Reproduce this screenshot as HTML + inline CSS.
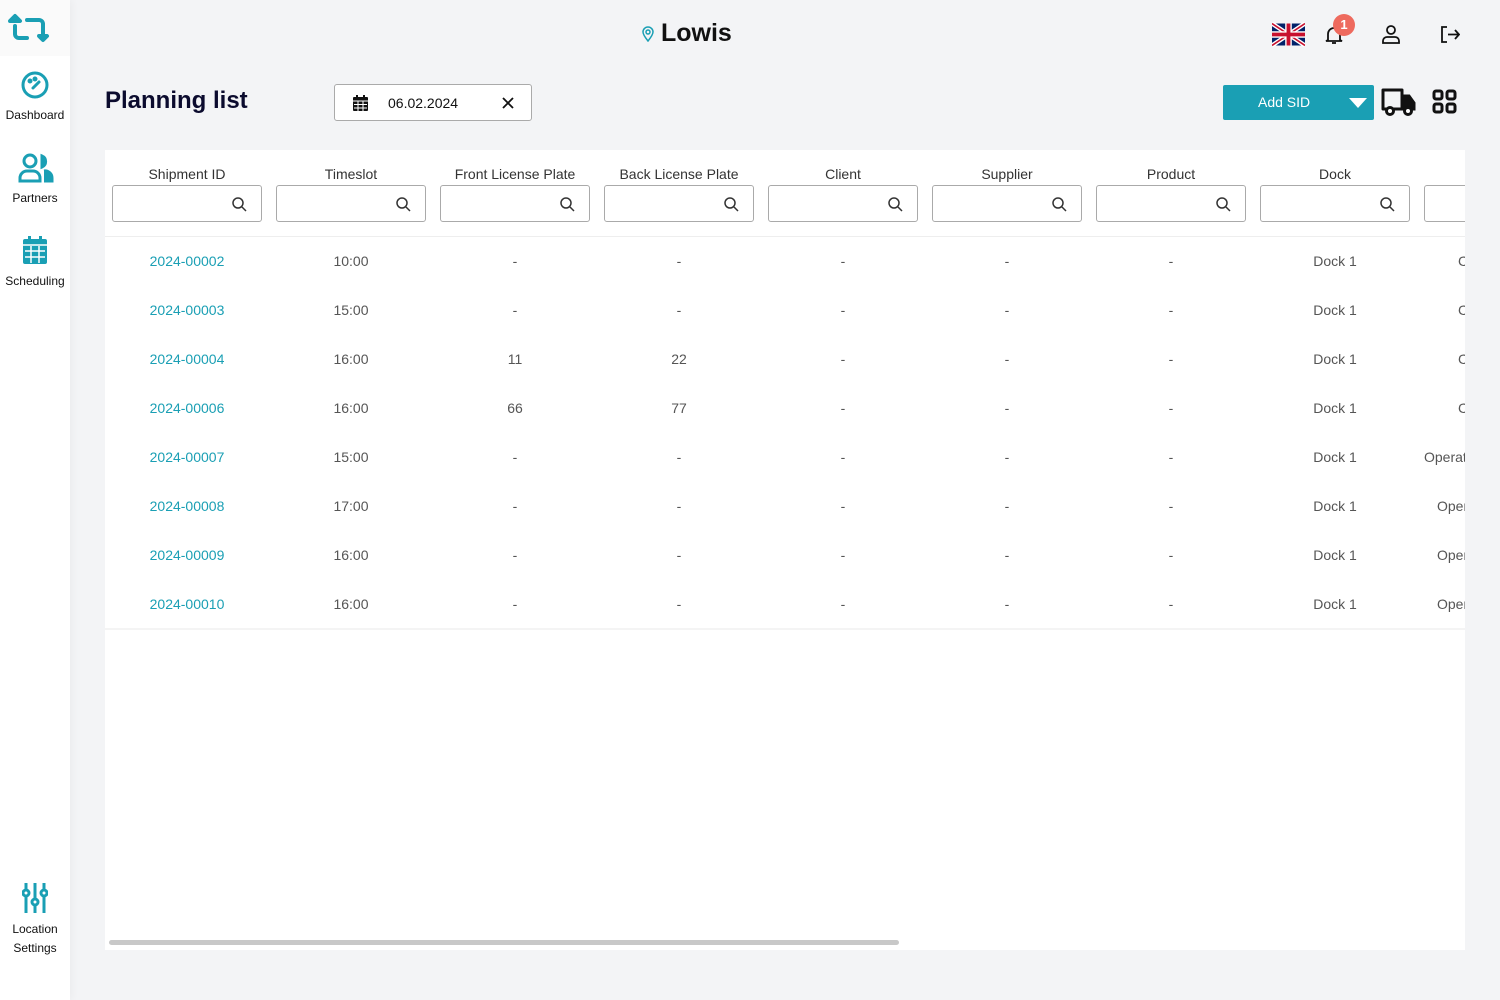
<!DOCTYPE html>
<html><head><meta charset="utf-8"><style>
*{margin:0;padding:0;box-sizing:border-box}
body{width:1500px;height:1000px;background:#f3f4f6;font-family:"Liberation Sans",Roboto,sans-serif;position:relative;overflow:hidden;color:#333}
.side{position:absolute;left:0;top:0;width:70px;height:1000px;background:#fff;box-shadow:2px 0 8px rgba(0,0,0,.04)}
.nav{position:absolute;left:0;width:70px;text-align:center;font-size:12px;color:#111;background:#fff}
.ab{position:absolute}
.card{position:absolute;left:105px;top:150px;width:1360px;height:800px;background:#fff;overflow:hidden}
.col{position:absolute;top:0;width:164px;text-align:center}
.col .h{font-size:14px;color:#333;margin-top:16px;height:19px}
.col .in{margin:0 auto;width:150px;height:37px;border:1px solid #aaa;border-radius:3px;position:relative}
.col .in svg{position:absolute;right:14px;top:11px}
.cell{position:absolute;width:164px;text-align:center;font-size:14px;color:#555;white-space:nowrap}
.id{color:#1a9fb4}
</style></head><body>
<div class="side">
 <div class="nav" style="top:0;height:56px;background:#fafafa">
  <svg class="ab" style="left:7px;top:12px" width="48" height="32" viewBox="0 0 48 32" fill="none" stroke="#1a9fb4" stroke-width="4" stroke-linejoin="round" stroke-linecap="round"><path d="M8 14V22a4 4 0 0 0 4 4h8M3 9l5-5 5 5z"/><path d="M20 8h12a4 4 0 0 1 4 4v10M32 24l4 4 4-4z" /></svg>
 </div>
 <div class="nav" style="top:57px;height:82px">
  <svg class="ab" style="left:21px;top:14px" width="28" height="28" viewBox="0 0 28 28" fill="none" stroke="#1a9fb4" stroke-width="3"><circle cx="14" cy="14" r="12"/><path d="M12 17l6-6" stroke-linecap="round"/><circle cx="9" cy="10" r="1" fill="#1a9fb4"/><circle cx="14" cy="8" r="1" fill="#1a9fb4"/></svg>
  <div class="ab" style="top:51px;width:70px">Dashboard</div></div>
 <div class="nav" style="top:140px;height:82px">
  <svg class="ab" style="left:18px;top:13px" width="36" height="30" viewBox="0 0 36 30" fill="none" stroke="#1a9fb4" stroke-width="3"><circle cx="12" cy="8" r="6"/><path d="M2 28v-3a7 7 0 0 1 7-7h6a7 7 0 0 1 7 7v3z"/><path d="M24 3a6 6 0 0 1 0 11z" fill="#1a9fb4"/><path d="M26 18a7 7 0 0 1 8 7v3h-8" fill="#1a9fb4"/></svg>
  <div class="ab" style="top:51px;width:70px">Partners</div></div>
 <div class="nav" style="top:223px;height:82px">
  <svg class="ab" style="left:23px;top:13px" width="24" height="28" viewBox="0 0 24 28"><rect x="0" y="3" width="24" height="25" rx="2" fill="#1a9fb4"/><rect x="5" y="0" width="3" height="6" fill="#1a9fb4"/><rect x="16" y="0" width="3" height="6" fill="#1a9fb4"/><path d="M0 9h24M2 15h20M2 21h20M8 10v17M16 10v17" stroke="#fff" stroke-width="1.5"/></svg>
  <div class="ab" style="top:51px;width:70px">Scheduling</div></div>
 <div class="nav" style="top:870px;height:102px">
  <svg class="ab" style="left:22px;top:13px" width="26" height="30" viewBox="0 0 26 30" fill="none" stroke="#1a9fb4" stroke-width="3"><path d="M4 0v30M13 0v30M22 0v30"/><circle cx="4" cy="10" r="3" fill="#fff"/><circle cx="13" cy="19" r="3" fill="#fff"/><circle cx="22" cy="10" r="3" fill="#fff"/></svg>
  <div class="ab" style="top:50px;width:70px;line-height:19px">Location<br>Settings</div></div>
</div>

<svg class="ab" style="left:642px;top:26px" width="12" height="16" viewBox="0 0 12 16" fill="none" stroke="#1a9fb4" stroke-width="1.5"><path d="M6 15C2 10 1 8 1 6a5 5 0 0 1 10 0c0 2-1 4-5 9z"/><circle cx="6" cy="6" r="2"/></svg>
<div class="ab" style="left:661px;top:19px;font-size:25px;font-weight:bold;color:#111">Lowis</div>

<svg class="ab" style="left:1272px;top:22px" width="33" height="25" viewBox="0 0 60 40"><rect width="60" height="40" fill="#012169"/><path d="M0 0L60 40M60 0L0 40" stroke="#fff" stroke-width="8"/><path d="M0 0L60 40M60 0L0 40" stroke="#c8102e" stroke-width="3"/><path d="M30 0v40M0 20h60" stroke="#fff" stroke-width="12"/><path d="M30 0v40M0 20h60" stroke="#c8102e" stroke-width="7"/></svg>
<svg class="ab" style="left:1325px;top:25px" width="18" height="20" viewBox="0 0 18 20" fill="none" stroke="#111" stroke-width="1.8"><path d="M3 15V9a6 6 0 0 1 12 0v6l2 1H1z"/><path d="M7 18h4"/></svg>
<div class="ab" style="left:1333px;top:14px;width:22px;height:22px;border-radius:50%;background:#ee6a5e;color:#fff;font-size:13px;font-weight:bold;text-align:center;line-height:22px">1</div>
<svg class="ab" style="left:1382px;top:25px" width="18" height="19" viewBox="0 0 18 19" fill="none" stroke="#111" stroke-width="1.8"><circle cx="9" cy="5" r="4"/><path d="M1 18v-2a4 4 0 0 1 4-4h8a4 4 0 0 1 4 4v2z"/></svg>
<svg class="ab" style="left:1440px;top:26px" width="20" height="17" viewBox="0 0 20 17" fill="none" stroke="#111" stroke-width="1.8"><path d="M7 1H2v15h5M8 8.5h11M15 4l4 4.5-4 4.5"/></svg>

<div class="ab" style="left:105px;top:87px;font-size:24px;font-weight:bold;color:#0b0b2e">Planning list</div>
<div class="ab" style="left:334px;top:84px;width:198px;height:37px;background:#fff;border:1px solid #aaa;border-radius:3px">
 <svg class="ab" style="left:18px;top:10px" width="15" height="16" viewBox="0 0 15 16"><rect y="2" width="15" height="14" rx="1" fill="#111"/><rect x="3" width="2" height="4" fill="#111"/><rect x="10" width="2" height="4" fill="#111"/><path d="M0 6h15M1 9.5h13M1 13h13M5 6v10M10 6v10" stroke="#fff" stroke-width="1"/></svg>
 <div class="ab" style="left:53px;top:10px;font-size:14px;color:#111">06.02.2024</div>
 <svg class="ab" style="left:167px;top:12px" width="12" height="12" viewBox="0 0 12 12" stroke="#111" stroke-width="1.8"><path d="M1 1l10 10M11 1L1 11"/></svg>
</div>
<div class="ab" style="left:1223px;top:85px;width:151px;height:35px;background:#1a9fb4;border-radius:2px;color:#fff;font-size:14px">
 <div class="ab" style="left:35px;top:9px">Add SID</div>
 <svg class="ab" style="left:126px;top:13px" width="18" height="10" viewBox="0 0 18 10"><path d="M0 0h18L9 10z" fill="#fff"/></svg>
</div>
<svg class="ab" style="left:1381px;top:87px" width="35" height="30" viewBox="0 0 35 30" fill="none" stroke="#111" stroke-width="3"><path d="M2 3h19v19H2z" stroke-linejoin="round"/><path d="M21 9h7l5 7v6H21z" fill="#111"/><circle cx="9" cy="24" r="3.5" fill="#fff"/><circle cx="27" cy="24" r="3.5" fill="#fff"/></svg>
<svg class="ab" style="left:1432px;top:89px" width="25" height="25" viewBox="0 0 25 25" fill="none" stroke="#111" stroke-width="3"><rect x="2" y="2" width="8" height="8" rx="2"/><rect x="15" y="2" width="8" height="8" rx="2"/><rect x="2" y="15" width="8" height="8" rx="2"/><rect x="15" y="15" width="8" height="8" rx="2"/></svg>

<div class="card">
 <div class="ab" style="left:0;top:86px;width:1360px;height:1px;background:#eee"></div>
 <div class="ab" style="left:0;top:478px;width:1360px;height:2px;background:#f4f4f4"></div>
 <div class="ab" style="left:4px;top:790px;width:790px;height:5px;border-radius:3px;background:#c8c8c8"></div>
 <div id="cols"></div>
</div>
<script>
const H=["Shipment ID","Timeslot","Front License Plate","Back License Plate","Client","Supplier","Product","Dock",""];
const R=[["2024-00002","10:00","-","-","C",1353],["2024-00003","15:00","-","-","C",1353],["2024-00004","16:00","11","22","C",1353],["2024-00006","16:00","66","77","C",1353],["2024-00007","15:00","-","-","Operational",1319],["2024-00008","17:00","-","-","Operational",1332],["2024-00009","16:00","-","-","Operational",1332],["2024-00010","16:00","-","-","Operational",1332]];
let s="";
const mag='<svg width="15" height="15" viewBox="0 0 15 15" fill="none" stroke="#333" stroke-width="1.5"><circle cx="6" cy="6" r="5"/><path d="M10 10l4 4"/></svg>';
H.forEach((h,i)=>{s+=`<div class="col" style="left:${i*164}px"><div class="h">${h}</div><div class="in">${mag}</div></div>`});
R.forEach((r,j)=>{const y=103+j*49;const v=[r[0],r[1],r[2],r[3],"-","-","-","Dock 1"];
v.forEach((t,i)=>{s+=`<div class="cell${i==0?' id':''}" style="left:${i*164}px;top:${y}px">${t}</div>`});
s+=`<div class="cell" style="left:${r[5]}px;width:auto;top:${y}px">${r[4]}</div>`;});
document.getElementById("cols").innerHTML=s;
</script>
</body></html>
